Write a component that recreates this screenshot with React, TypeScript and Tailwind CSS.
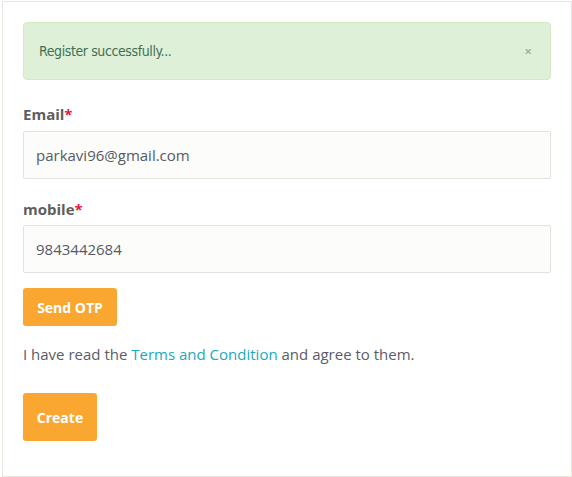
import React from "react";

const App: React.FC = () => {
  return (
    <div className="w-[572px] h-[477px] bg-white pl-[2px] pt-[1px]" style={{ fontFamily: '"Open Sans", sans-serif' }}>
      <div className="w-[570px] h-[476px] border border-[#e8e6de] px-[20px] pt-[20px]">
        {/* Alert */}
        <div className="flex items-center justify-between h-[58px] bg-[#dff0d8] border border-[#d6e9c6] rounded-[4px] pl-[15px] pr-[18px]">
          <span className="text-[14px] text-[#3f6f55] tracking-[-0.4px]" style={{ fontFamily: '"DejaVu Sans Condensed", "Liberation Sans Narrow", Lato, sans-serif', fontStretch: "condensed" }}>
            Register successfully...
          </span>
          <span className="text-[13px] font-bold text-[#a3b39d] leading-none">×</span>
        </div>

        {/* Email */}
        <label className="block mt-[23px] text-[15px] font-bold text-[#5e5e5e] leading-[22px]">
          Email<span className="text-[#e8163c]">*</span>
        </label>
        <div className="mt-[6px] h-[48px] bg-[#fcfcfa] border border-[#e3e2dc] rounded-[2px] flex items-center px-[12px] text-[15px] text-[#555a66]">
          parkavi96@gmail.com
        </div>

        {/* mobile */}
        <label className="block mt-[19px] text-[15px] font-bold text-[#5e5e5e] leading-[22px]">
          mobile<span className="text-[#e8163c]">*</span>
        </label>
        <div className="mt-[5px] h-[48px] bg-[#fcfcfa] border border-[#e3e2dc] rounded-[2px] flex items-center px-[12px] text-[15px] text-[#555a66]">
          9843442684
        </div>

        <button className="mt-[15px] h-[38px] w-[94px] bg-[#f9a731] rounded-[3px] text-white font-bold text-[14px]">
          Send OTP
        </button>

        <p className="mt-[17px] text-[15px] text-[#5c5c66] leading-[22px]">
          I have read the <span className="text-[#1aa9b8]">Terms and Condition</span> and agree to them.
        </p>

        <button className="mt-[28px] h-[48px] w-[74px] bg-[#f9a731] rounded-[3px] text-white font-bold text-[14px]">
          Create
        </button>
      </div>
    </div>
  );
};

export default App;
